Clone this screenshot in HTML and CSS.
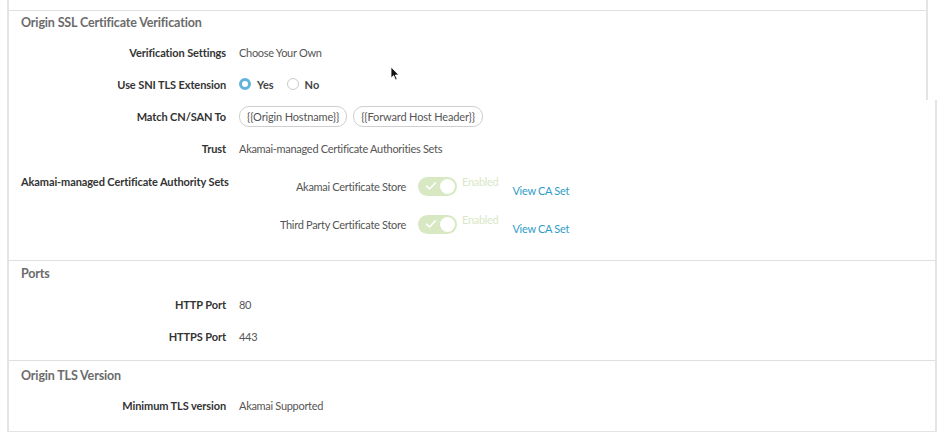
FILE: index.html
```html
<!DOCTYPE html>
<html lang="en">
<head>
    <meta charset="UTF-8">
    <meta name="viewport" content="width=device-width, initial-scale=1.0">
    <title>Origin Server</title>
<link rel="stylesheet" href="styles.css">
</head>
<body>
    <div class="panel">
        <div class="top">
            <div class="sec-head">
                <h2 class="sec-title">Origin SSL Certificate Verification</h2>
                <div class="row">
                    <span class="label">Verification Settings</span>
                    <span class="value">Choose Your Own</span>
                </div>
                <div class="row">
                    <span class="label">Use SNI TLS Extension</span>
                    <span class="value radios">
                        <span class="radio on"></span><b>Yes</b>
                        <span class="radio"></span><b>No</b>
                    </span>
                </div>
            </div>
            <svg class="cursor" width="10" height="15" viewBox="0 0 10 15">
                <path d="M1 1 L1 12 L3.6 9.6 L5.6 14 L7.2 13.3 L5.3 9 L8.8 9 Z" fill="#111" stroke="#fff" stroke-width="0.8"/>
            </svg>
        </div>

        <div class="rest">
            <div class="sec sec-first">
                <div class="row">
                    <span class="label">Match CN/SAN To</span>
                    <span class="value pills">
                        <span class="pill">{{Origin Hostname}}</span>
                        <span class="pill">{{Forward Host Header}}</span>
                    </span>
                </div>
                <div class="row">
                    <span class="label">Trust</span>
                    <span class="value">Akamai-managed Certificate Authorities Sets</span>
                </div>
                <div class="row row-top">
                    <span class="label label-wide">Akamai-managed Certificate Authority Sets</span>
                    <div class="stores">
                        <div class="store">
                            <span class="store-name">Akamai Certificate Store</span>
                            <span class="toggle">
                                <svg width="12" height="10" viewBox="0 0 12 10"><path d="M1.5 5.2 L4.5 8 L10.5 1.8" fill="none" stroke="#fff" stroke-width="1.6" stroke-linecap="round" stroke-linejoin="round"/></svg>
                                <span class="knob"></span>
                            </span>
                            <span class="enabled">Enabled</span>
                            <a class="link" href="#">View CA Set</a>
                        </div>
                        <div class="store">
                            <span class="store-name">Third Party Certificate Store</span>
                            <span class="toggle">
                                <svg width="12" height="10" viewBox="0 0 12 10"><path d="M1.5 5.2 L4.5 8 L10.5 1.8" fill="none" stroke="#fff" stroke-width="1.6" stroke-linecap="round" stroke-linejoin="round"/></svg>
                                <span class="knob"></span>
                            </span>
                            <span class="enabled">Enabled</span>
                            <a class="link" href="#">View CA Set</a>
                        </div>
                    </div>
                </div>
            </div>

            <div class="sec sec-ports">
                <h2 class="sec-title">Ports</h2>
                <div class="row">
                    <span class="label">HTTP Port</span>
                    <span class="value">80</span>
                </div>
                <div class="row">
                    <span class="label">HTTPS Port</span>
                    <span class="value">443</span>
                </div>
            </div>

            <div class="sec sec-tls">
                <h2 class="sec-title">Origin TLS Version</h2>
                <div class="row">
                    <span class="label">Minimum TLS version</span>
                    <span class="value">Akamai Supported</span>
                </div>
            </div>
        </div>
    </div>
</body>
</html>
```

FILE: styles.css
```css
*{
    margin: 0;
    padding: 0;
    box-sizing: border-box;
}
body{
    background-color: #fff;
    font-family: Lato, "Open Sans", sans-serif;
    font-size: 11px;
    letter-spacing: -0.3px;
    color: #555;
    height: 439px;
    overflow: hidden;
}
.panel{
    margin-left: 7px;
    border-left: 2px solid #e4e4e4;
}
.top{
    position: relative;
    margin-right: 16px;
    padding-top: 10px;
    border-right: 2px solid #e4e4e4;
}
.sec-head{
    border-top: 1px solid #e0e0e0;
}
.rest{
    margin-right: 7px;
    border-right: 2px solid #e4e4e4;
    border-bottom: 1px solid #e4e4e4;
}
.sec{
    border-top: 1px solid #e0e0e0;
}
.sec-first{
    border-top: none;
    padding-bottom: 17px;
}
.sec-ports{
    padding-bottom: 8px;
}
.sec-tls{
    padding-bottom: 10px;
}
.sec-title{
    padding: 3px 0 0 12px;
    height: 25px;
    line-height: 18px;
    font-size: 12.5px;
    letter-spacing: -0.15px;
    font-weight: 700;
    color: #6b6b6b;
}
.sec-ports .sec-title{
    padding-top: 4px;
    height: 27px;
}
.sec-tls .sec-title{
    padding-top: 6px;
    height: 28px;
}
.row{
    display: grid;
    grid-template-columns: 217px 1fr;
    column-gap: 13px;
    align-items: center;
    height: 32px;
}
.label{
    text-align: right;
    font-weight: 700;
    letter-spacing: -0.1px;
    color: #333;
    white-space: nowrap;
}
.value{
    white-space: nowrap;
}
.radios{
    display: flex;
    align-items: center;
}
.radios b{
    font-weight: 700;
    letter-spacing: 0;
    color: #444;
    margin-right: 13px;
}
.radio{
    width: 12px;
    height: 12px;
    border-radius: 50%;
    border: 1px solid #c8c8c8;
    margin-right: 6px;
}
.radio.on{
    border: 3px solid #62b3dc;
}
.pills{
    display: flex;
    gap: 6px;
}
.pill{
    border: 1px solid #cfcfcf;
    border-radius: 10px;
    height: 21px;
    line-height: 19px;
    padding: 0 7px;
    font-size: 11px;
    letter-spacing: -0.15px;
}
.row-top{
    height: auto;
    align-items: start;
}
.label-wide{
    text-align: left;
    padding: 11px 0 0 12px;
    overflow: visible;
}
.stores{
    display: flex;
    flex-direction: column;
    padding-top: 3px;
}
.store{
    display: flex;
    align-items: center;
    height: 38px;
}
.store-name{
    width: 167px;
    text-align: right;
    white-space: nowrap;
}
.toggle{
    margin-left: 12px;
    width: 39px;
    height: 19px;
    border-radius: 10px;
    background-color: #d7e8c3;
    display: flex;
    align-items: center;
    justify-content: space-between;
    padding: 0 2px 0 7px;
}
.knob{
    width: 15px;
    height: 15px;
    border-radius: 50%;
    background-color: #fff;
}
.enabled{
    margin-left: 5px;
    color: #d9e8c6;
    padding-bottom: 10px;
}
.link{
    margin-left: 14px;
    color: #2f9cc8;
    text-decoration: none;
    padding-top: 8px;
}
.cursor{
    position: absolute;
    left: 381px;
    top: 66px;
}
```
